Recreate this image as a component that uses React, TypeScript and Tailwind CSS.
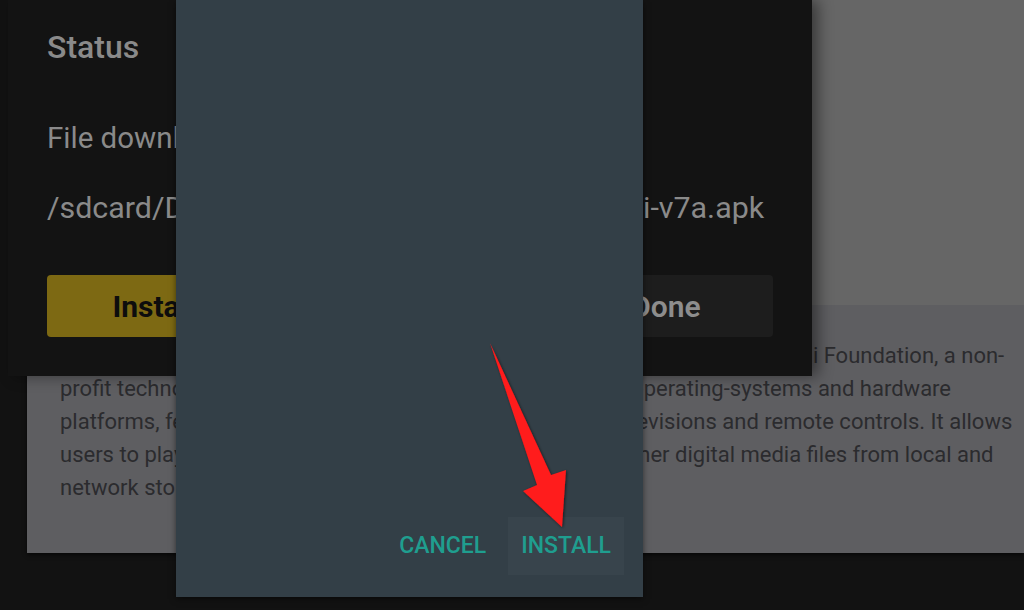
import React from "react";

export default function App() {
  return (
    <div className="relative w-[1024px] h-[610px] overflow-hidden bg-[#121212] font-['Roboto',sans-serif]">
      {/* Background screen: app detail panel */}
      <div className="ml-[27px] w-[997px] h-[553px] flex flex-col shadow-[0_2px_4px_rgba(0,0,0,0.6)]">
        <div className="h-[305px] bg-[#666666]" />
        <div className="flex-1 bg-[#5e5e61] pl-[33px] pt-[34px] text-[22px] leading-[33px] text-[#2b2b2e]">
          <div className="whitespace-nowrap">Kodi is a free and open-source media player app developed by the XBMC/Kodi Foundation, a non-</div>
          <div className="whitespace-nowrap">profit technology consortium. Kodi is available on multiple operating-systems and hardware</div>
          <div className="whitespace-nowrap">platforms, featuring a 10-foot user interface for use with televisions and remote controls. It allows</div>
          <div className="whitespace-nowrap">users to play and view most videos, music, podcasts and other digital media files from local and</div>
          <div className="whitespace-nowrap">network storage media and the internet.</div>
        </div>
      </div>

      {/* Status dialog (dimmed) */}
      <div className="absolute left-[8px] top-0 w-[804px] h-[376px] bg-[#131313] shadow-[6px_0_14px_rgba(0,0,0,0.45)] px-[39px] flex flex-col">
        <div className="mt-[27px] text-[32px] leading-[40px] font-medium text-[#8a8a8a]">Status</div>
        <div className="mt-[53px] text-[29.5px] leading-[36px] text-[#8a8a8a] whitespace-nowrap">File downloaded successfully to:</div>
        <div className="mt-[34px] text-[30.4px] leading-[36px] text-[#8a8a8a] whitespace-nowrap">/sdcard/Download/kodi-19.1-Matrix-armeabi-v7a.apk</div>
        <div className="mt-[49px] flex gap-[42px]">
          <div className="w-[214px] h-[62px] rounded-[4px] bg-[#7d6913] flex items-center justify-center text-[30px] font-bold text-[#0d0d0d]">Install</div>
          <div className="w-[214px] h-[62px] rounded-[4px] bg-[#1d1d1d] flex items-center justify-center text-[30px] font-semibold text-[#8d8d8d]">Delete</div>
          <div className="w-[214px] h-[62px] rounded-[4px] bg-[#1d1d1d] flex items-center justify-center text-[30px] font-semibold text-[#8d8d8d]">Done</div>
        </div>
      </div>

      {/* Package installer dialog */}
      <div className="absolute left-[176px] top-0 w-[467px] h-[597px] bg-[#333f47] shadow-[0_2px_6px_rgba(0,0,0,0.5)] flex flex-col justify-end items-end pr-[19px] pb-[22px]">
        <div className="flex gap-[9px]">
          <div className="h-[58px] px-[13px] flex items-center text-[23px] font-medium text-[#1f9e8f]">CANCEL</div>
          <div className="h-[58px] px-[13px] flex items-center bg-[#38444c] text-[23px] font-medium text-[#1f9e8f]">INSTALL</div>
        </div>
      </div>

      {/* Red annotation arrow */}
      <svg className="absolute left-0 top-0 pointer-events-none" width="1024" height="610" viewBox="0 0 1024 610">
        <defs>
          <filter id="sh" x="-20%" y="-20%" width="140%" height="140%">
            <feDropShadow dx="1" dy="1" stdDeviation="1.5" floodColor="#000" floodOpacity="0.55" />
          </filter>
        </defs>
        <polygon
          points="490,343 551,475 566,470 562,527 523,491 537,485"
          fill="#ff1a1a"
          filter="url(#sh)"
        />
      </svg>
    </div>
  );
}
